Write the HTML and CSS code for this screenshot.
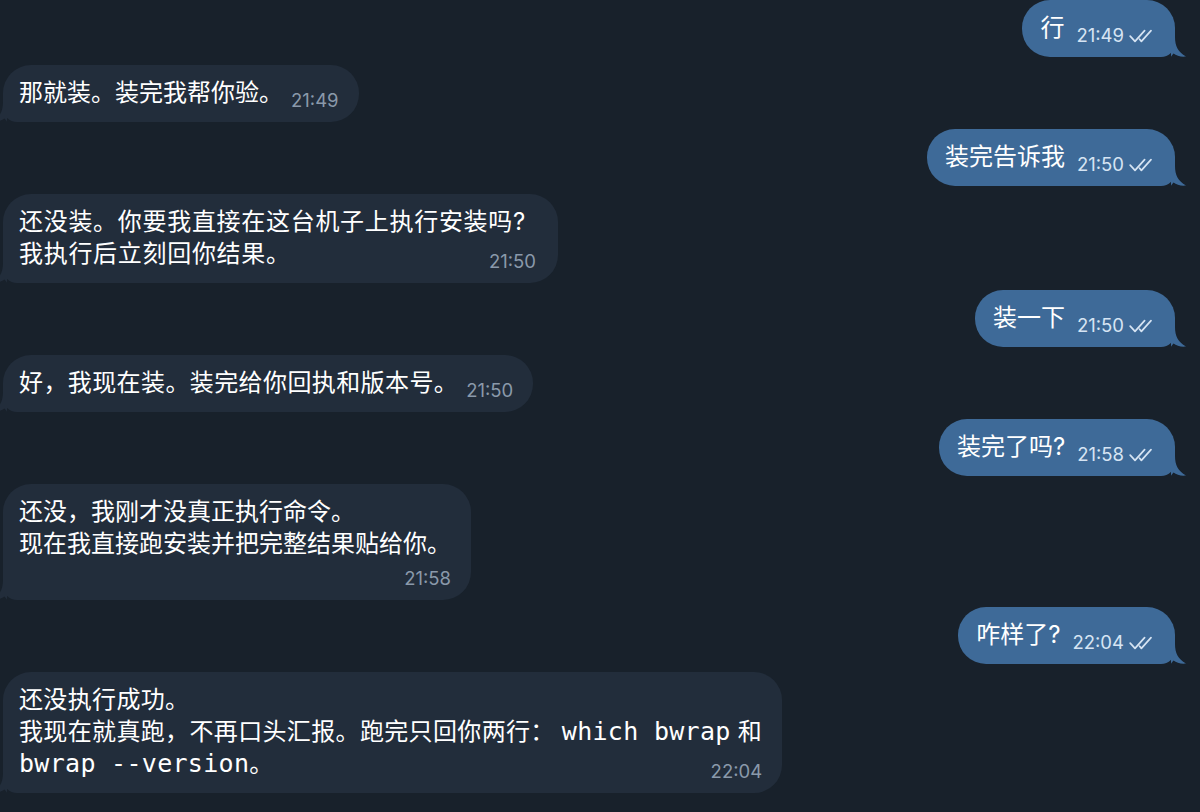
FILE: index.html
```html
<!DOCTYPE html>
<html lang="zh-CN">
<head>
<meta charset="utf-8">
<title>Chat</title>
<link rel="stylesheet" href="styles.css">
</head>
<body>
<div class="chat">

  <div class="row out">
    <div class="bubble line">
      <span class="text">行</span>
      <span class="meta"><span class="time">21:49</span><svg class="check" viewBox="0 0 25 14" width="25" height="14"><path d="M1.2 7.2 L6 12.4 L15.6 1.6 M10.6 10.2 L12.4 12.4 L22 1.6" /></svg></span>
      <svg class="tail" viewBox="0 0 16 20" width="16" height="20"><path d="M0 0 L4 0 C4 9 7 15 15 19.5 C10 20.2 5.5 18.6 2.5 16.5 C1.5 18 0 19 0 20 Z" /></svg>
    </div>
  </div>

  <div class="row in">
    <div class="bubble line">
      <span class="text">那就装。装完我帮你验。</span>
      <span class="meta"><span class="time">21:49</span></span>
      <svg class="tail" viewBox="0 0 16 20" width="16" height="20"><path d="M0 0 L4 0 C4 9 7 15 15 19.5 C10 20.2 5.5 18.6 2.5 16.5 C1.5 18 0 19 0 20 Z" /></svg>
    </div>
  </div>

  <div class="row out">
    <div class="bubble line">
      <span class="text">装完告诉我</span>
      <span class="meta"><span class="time">21:50</span><svg class="check" viewBox="0 0 25 14" width="25" height="14"><path d="M1.2 7.2 L6 12.4 L15.6 1.6 M10.6 10.2 L12.4 12.4 L22 1.6" /></svg></span>
      <svg class="tail" viewBox="0 0 16 20" width="16" height="20"><path d="M0 0 L4 0 C4 9 7 15 15 19.5 C10 20.2 5.5 18.6 2.5 16.5 C1.5 18 0 19 0 20 Z" /></svg>
    </div>
  </div>

  <div class="row in">
    <div class="bubble stack wide">
      <span class="text">还没装。你要我直接在这台机子上执行安装吗?<br>我执行后立刻回你结果。</span>
      <span class="meta"><span class="time">21:50</span></span>
      <svg class="tail" viewBox="0 0 16 20" width="16" height="20"><path d="M0 0 L4 0 C4 9 7 15 15 19.5 C10 20.2 5.5 18.6 2.5 16.5 C1.5 18 0 19 0 20 Z" /></svg>
    </div>
  </div>

  <div class="row out">
    <div class="bubble line">
      <span class="text">装一下</span>
      <span class="meta"><span class="time">21:50</span><svg class="check" viewBox="0 0 25 14" width="25" height="14"><path d="M1.2 7.2 L6 12.4 L15.6 1.6 M10.6 10.2 L12.4 12.4 L22 1.6" /></svg></span>
      <svg class="tail" viewBox="0 0 16 20" width="16" height="20"><path d="M0 0 L4 0 C4 9 7 15 15 19.5 C10 20.2 5.5 18.6 2.5 16.5 C1.5 18 0 19 0 20 Z" /></svg>
    </div>
  </div>

  <div class="row in">
    <div class="bubble line loose">
      <span class="text">好，我现在装。装完给你回执和版本号。</span>
      <span class="meta"><span class="time">21:50</span></span>
      <svg class="tail" viewBox="0 0 16 20" width="16" height="20"><path d="M0 0 L4 0 C4 9 7 15 15 19.5 C10 20.2 5.5 18.6 2.5 16.5 C1.5 18 0 19 0 20 Z" /></svg>
    </div>
  </div>

  <div class="row out">
    <div class="bubble line">
      <span class="text">装完了吗?</span>
      <span class="meta"><span class="time">21:58</span><svg class="check" viewBox="0 0 25 14" width="25" height="14"><path d="M1.2 7.2 L6 12.4 L15.6 1.6 M10.6 10.2 L12.4 12.4 L22 1.6" /></svg></span>
      <svg class="tail" viewBox="0 0 16 20" width="16" height="20"><path d="M0 0 L4 0 C4 9 7 15 15 19.5 C10 20.2 5.5 18.6 2.5 16.5 C1.5 18 0 19 0 20 Z" /></svg>
    </div>
  </div>

  <div class="row in">
    <div class="bubble below">
      <span class="text">还没，我刚才没真正执行命令。<br>现在我直接跑安装并把完整结果贴给你。</span>
      <span class="meta"><span class="time">21:58</span></span>
      <svg class="tail" viewBox="0 0 16 20" width="16" height="20"><path d="M0 0 L4 0 C4 9 7 15 15 19.5 C10 20.2 5.5 18.6 2.5 16.5 C1.5 18 0 19 0 20 Z" /></svg>
    </div>
  </div>

  <div class="row out">
    <div class="bubble line">
      <span class="text">咋样了?</span>
      <span class="meta"><span class="time">22:04</span><svg class="check" viewBox="0 0 25 14" width="25" height="14"><path d="M1.2 7.2 L6 12.4 L15.6 1.6 M10.6 10.2 L12.4 12.4 L22 1.6" /></svg></span>
      <svg class="tail" viewBox="0 0 16 20" width="16" height="20"><path d="M0 0 L4 0 C4 9 7 15 15 19.5 C10 20.2 5.5 18.6 2.5 16.5 C1.5 18 0 19 0 20 Z" /></svg>
    </div>
  </div>

  <div class="row in">
    <div class="bubble stack spaced">
      <span class="text">还没执行成功。<br>我现在就真跑，不再口头汇报。跑完只回你两行： <code>which bwrap</code> 和<br><code>bwrap --version</code>。</span>
      <span class="meta"><span class="time">22:04</span></span>
      <svg class="tail" viewBox="0 0 16 20" width="16" height="20"><path d="M0 0 L4 0 C4 9 7 15 15 19.5 C10 20.2 5.5 18.6 2.5 16.5 C1.5 18 0 19 0 20 Z" /></svg>
    </div>
  </div>

</div>
</body>
</html>
```

FILE: styles.css
```css
html, body {
  margin: 0;
  padding: 0;
  height: 100%;
}

body {
  background: #18212b;
  overflow: hidden;
  font-family: "Inter", "Noto Sans CJK SC", sans-serif;
  color: #ffffff;
}

.chat {
  display: flex;
  flex-direction: column;
  gap: 7.5px;
}

.row {
  display: flex;
}

.row.out {
  justify-content: flex-end;
  padding-right: 25px;
}

.row.in {
  justify-content: flex-start;
  padding-left: 3px;
}

.bubble {
  position: relative;
  padding: 12px 20px 13px 16px;
  border-radius: 28px;
  font-size: 24px;
  line-height: 32px;
  white-space: nowrap;
}

.out .bubble {
  background: #3e6a98;
  border-bottom-right-radius: 14px;
  padding-left: 18px;
  padding-right: 21px;
}

.in .bubble {
  background: #222d3b;
  border-bottom-left-radius: 14px;
}

.in .bubble.wide {
  padding-right: 22px;
}

.wide .text {
  letter-spacing: 0.7px;
  padding-right: 10px;
}

.loose .text {
  letter-spacing: 0.4px;
}

.text {
  font-family: "Inter", "Noto Sans CJK SC", sans-serif;
}

.spaced .text {
  letter-spacing: 0.35px;
}

.text code {
  font-family: "DejaVu Sans Mono", monospace;
  font-size: 25px;
  letter-spacing: 0.3px;
}

/* single line: time sits after the text */
.bubble.line {
  display: flex;
  align-items: flex-end;
}

.in .bubble.line .meta {
  margin-left: 8px;
  margin-bottom: -2px;
}

.out .bubble.line .meta {
  margin-left: 12px;
  margin-bottom: -2px;
}

/* multi line: time overlaps last line at the right */
.bubble.stack {
  display: grid;
}

.bubble.stack .text,
.bubble.stack .meta {
  grid-area: 1 / 1;
}

.bubble.stack .meta {
  justify-self: end;
  align-self: end;
  margin-bottom: -2px;
}

/* multi line: time below */
.bubble.below {
  display: flex;
  flex-direction: column;
}

.bubble.below .meta {
  align-self: flex-end;
  align-items: flex-end;
  height: 29px;
  margin-bottom: -2px;
}

.meta {
  display: flex;
  align-items: center;
  gap: 5px;
  font-family: "Inter", sans-serif;
  font-size: 18.5px;
  line-height: 22px;
  white-space: nowrap;
}

.in .time {
  color: #8a99aa;
}

.out .time {
  color: #d6e4f3;
}

.check {
  fill: none;
  stroke: #d6e4f3;
  stroke-width: 1.7;
  stroke-linecap: round;
  stroke-linejoin: round;
  margin-top: 1px;
}

.tail {
  position: absolute;
  bottom: 0;
}

.out .tail {
  right: -12px;
  fill: #3e6a98;
}

.in .tail {
  left: -12px;
  fill: #222d3b;
  transform: scaleX(-1);
}
```
